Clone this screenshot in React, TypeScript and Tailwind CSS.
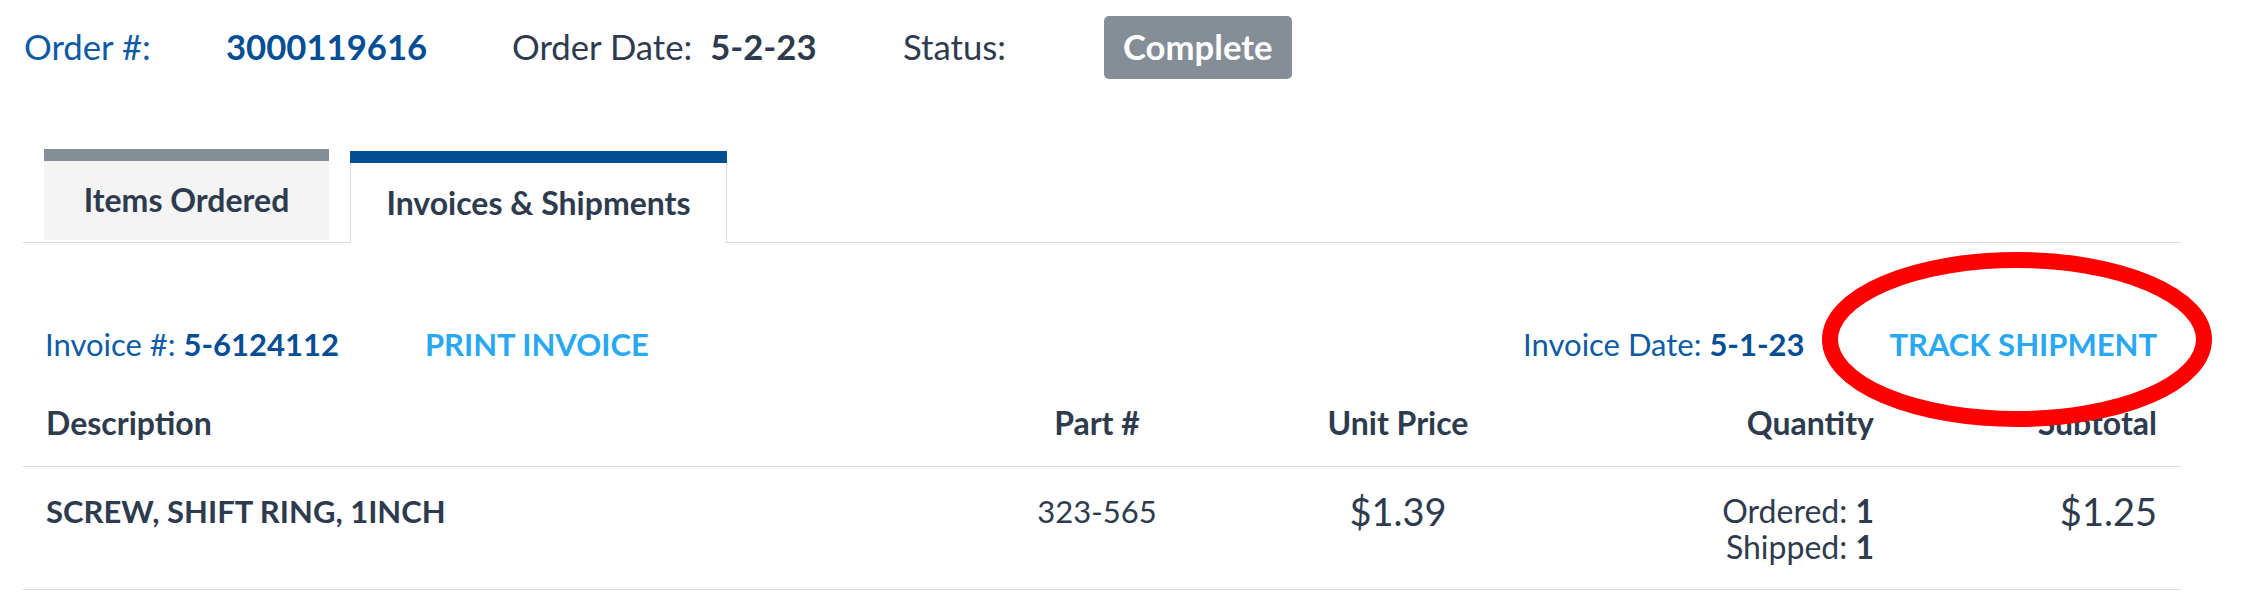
export default function App() {
  return (
    <div className="relative w-[2250px] h-[608px] bg-white font-['Lato',sans-serif] text-[#2e3b4e] pt-[16px]">
      {/* Order summary */}
      <div className="flex items-center h-[63px] pl-[24px] text-[34.7px]">
        <span className="w-[202px] text-[#0d5ba4]">Order #:</span>
        <span className="w-[286px] font-bold text-[#044e96]">3000119616</span>
        <span className="w-[391px] flex items-center">
          <span>Order Date:</span>
          <span className="ml-[18px] font-bold">5-2-23</span>
        </span>
        <span className="w-[201px]">Status:</span>
        <span className="h-[63px] flex items-center px-[19px] rounded-[5px] bg-[#858d97] text-white font-bold">
          Complete
        </span>
      </div>

      {/* Tabs */}
      <div className="mt-[70px] ml-[23px] w-[2157px] flex items-end gap-[21px] pl-[21px] h-[94px] border-b border-[#dcdcdc]">
        <div className="w-[285px] h-[91px] mb-[2px] flex flex-col">
          <div className="h-[12px] bg-[#858d97]" />
          <div className="flex-1 bg-[#f4f4f4] flex items-center justify-center text-[32px] font-bold pb-[2px]">
            Items Ordered
          </div>
        </div>
        <div className="w-[377px] h-[92px] -mb-px flex flex-col bg-white">
          <div className="h-[12px] bg-[#044e92]" />
          <div className="flex-1 border-x border-[#dcdcdc] flex items-center justify-center text-[32px] font-bold">
            Invoices &amp; Shipments
          </div>
        </div>
      </div>

      {/* Invoice line */}
      <div className="mt-[71px] ml-[45px] w-[2112px] h-[60px] flex items-center justify-between text-[31px]">
        <div className="flex items-center">
          <span className="text-[#0d5ba4]">
            Invoice #: <span className="font-bold text-[#044e96]">5-6124112</span>
          </span>
          <span className="ml-[86px] font-bold text-[#29a8f2]">PRINT INVOICE</span>
        </div>
        <div className="flex items-center">
          <span className="text-[#0d5ba4]">
            Invoice Date: <span className="font-bold text-[#044e96]">5-1-23</span>
          </span>
          <span className="ml-[85px] font-bold text-[#29a8f2]">TRACK SHIPMENT</span>
        </div>
      </div>

      {/* Items table */}
      <div className="ml-[23px] w-[2157px]">
        <div className="grid grid-cols-[951px_200px_402px_275px_283px] items-center h-[93px] pt-[5px] px-[23px] border-b border-[#dcdcdc] text-[32px] font-bold">
          <div>Description</div>
          <div className="text-center">Part #</div>
          <div className="text-center">Unit Price</div>
          <div className="text-right">Quantity</div>
          <div className="text-right">Subtotal</div>
        </div>
        <div className="grid grid-cols-[951px_200px_402px_275px_283px] items-start h-[123px] pt-[26px] px-[23px] border-b border-[#dcdcdc] leading-[36px]">
          <div className="text-[31px] font-bold">SCREW, SHIFT RING, 1INCH</div>
          <div className="text-center text-[31px]">323-565</div>
          <div className="text-center text-[38px]">$1.39</div>
          <div className="text-right text-[32px]">
            <div>
              Ordered: <span className="font-bold">1</span>
            </div>
            <div>
              Shipped: <span className="font-bold">1</span>
            </div>
          </div>
          <div className="text-right text-[38px]">$1.25</div>
        </div>
      </div>

      {/* Red annotation circle */}
      <svg className="absolute left-[1822px] top-[252px]" width="390" height="175" viewBox="0 0 390 175">
        <ellipse cx="195" cy="87.5" rx="187" ry="79.5" fill="none" stroke="#ff0000" strokeWidth="16" />
      </svg>
    </div>
  );
}
